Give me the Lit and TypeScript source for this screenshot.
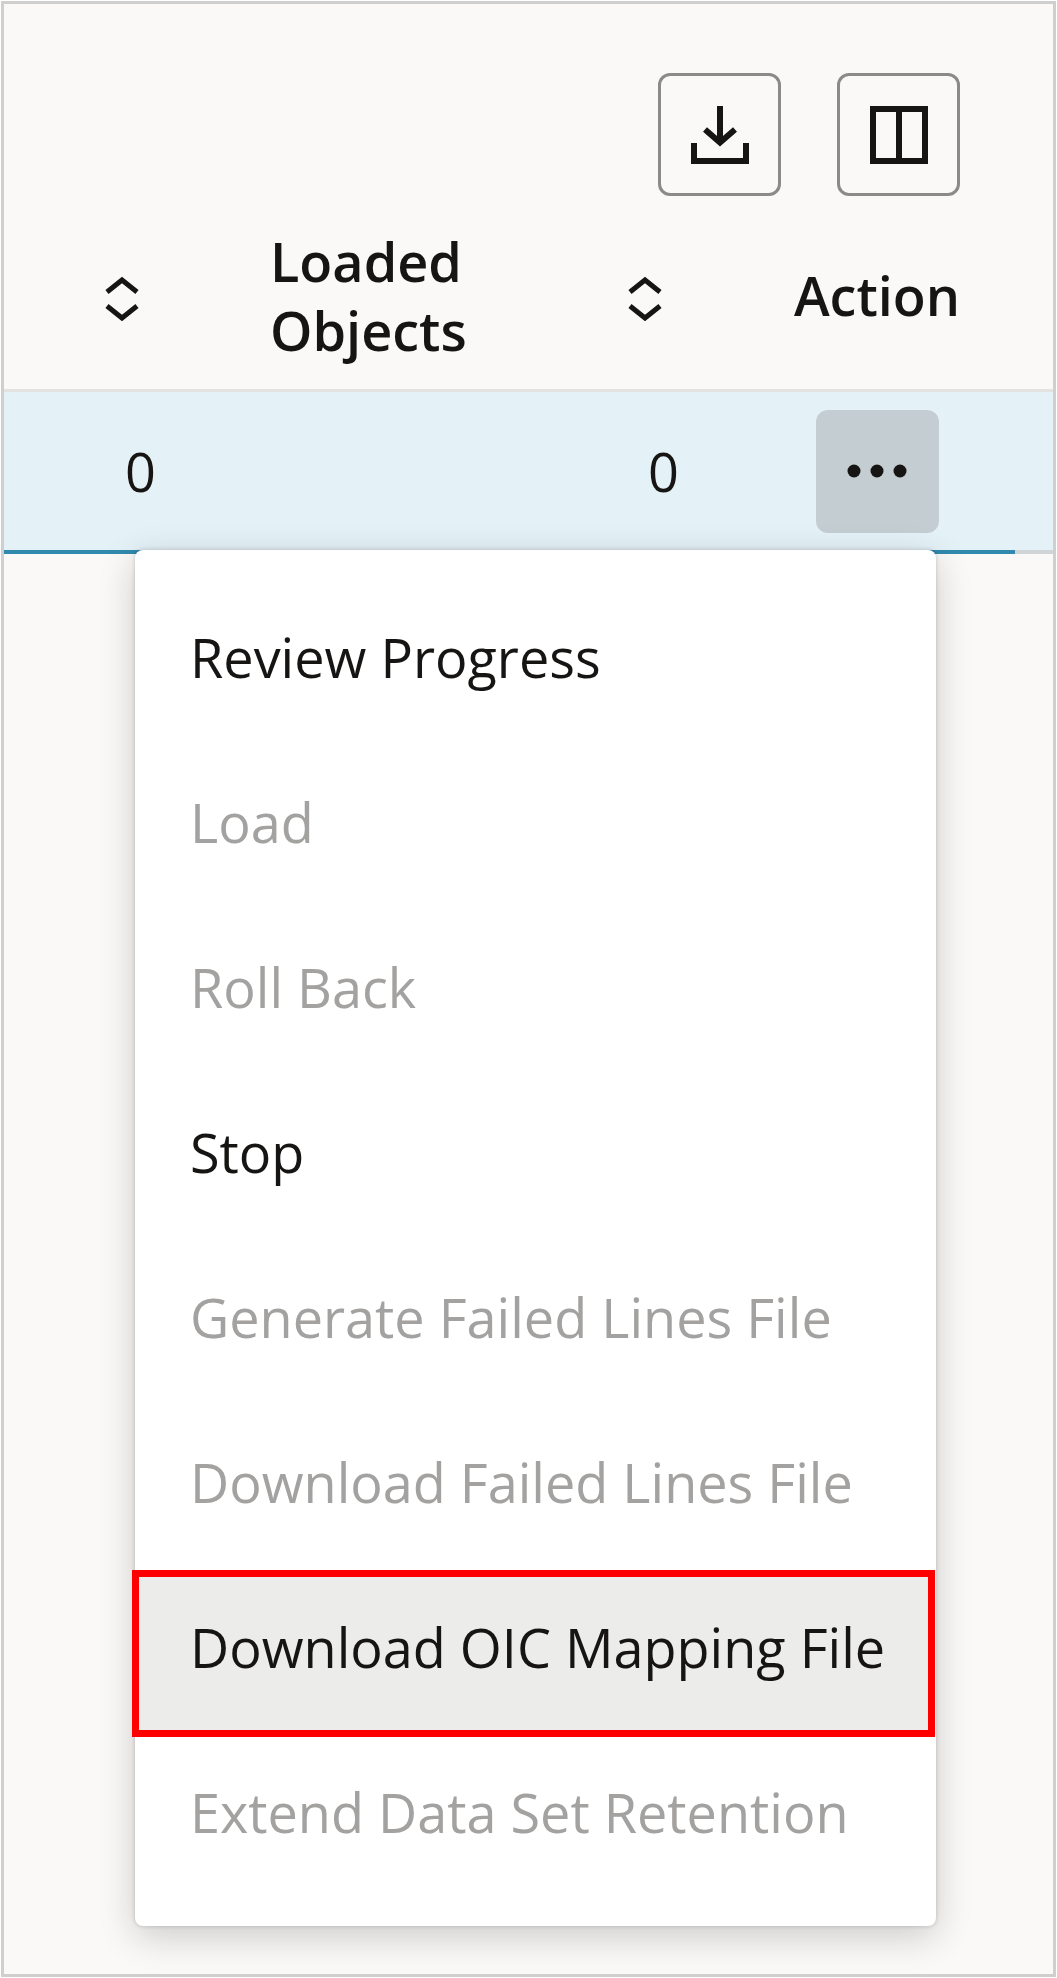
import { LitElement, html, css, svg } from "lit";
import { customElement, property, state } from "lit/decorators.js";
import { classMap } from "lit/directives/class-map.js";

interface MenuItem {
  label: string;
  disabled?: boolean;
  highlighted?: boolean;
}

const downloadIcon = svg`
  <svg viewBox="0 0 60 60" width="60" height="60" fill="none" stroke="currentColor" stroke-width="6" aria-hidden="true">
    <path d="M30 1V38"/>
    <path d="M15 24.500L30 37.500L45 24.500"/>
    <path d="M24 33H36L30 39.500Z" fill="currentColor" stroke-width="2"/>
    <path d="M4 38V56H56V38"/>
  </svg>`;

const columnsIcon = svg`
  <svg viewBox="0 0 60 60" width="60" height="60" fill="none" stroke="currentColor" stroke-width="6" aria-hidden="true">
    <path d="M4 4H56V56H4Z"/>
    <path d="M30 4V56"/>
  </svg>`;

const sortIcon = svg`
  <svg viewBox="0 0 36 48" width="36" height="48" fill="none" stroke="currentColor" stroke-width="5" aria-hidden="true">
    <path d="M3 17L18 5L33 17"/>
    <path d="M3 31L18 43L33 31"/>
  </svg>`;

const moreIcon = svg`
  <svg viewBox="0 0 60 16" width="60" height="16" fill="currentColor" aria-hidden="true">
    <circle cx="7" cy="8" r="6.500"/>
    <circle cx="30" cy="8" r="6.500"/>
    <circle cx="53" cy="8" r="6.500"/>
  </svg>`;

@customElement("action-menu")
export class ActionMenu extends LitElement {
  @property({ attribute: false }) items: MenuItem[] = [];

  static styles = css`
    :host {
      display: block;
    }
    .menu {
      list-style: none;
      margin: 0;
      padding: 30px 0 26px;
      background: #fff;
      border-radius: 8px;
      box-shadow: 0 0 4px rgba(22, 21, 19, 0.2), 0 10px 36px rgba(22, 21, 19, 0.2);
    }
    .item {
      position: relative;
      display: flex;
      align-items: center;
      box-sizing: border-box;
      width: 100%;
      height: 165px;
      margin: 0;
      padding: 0 55px 10px;
      border: 0;
      background: transparent;
      color: #161513;
      font: inherit;
      text-align: left;
      white-space: nowrap;
    }
    .item:disabled {
      color: #a3a2a0;
    }
    .highlighted {
      background: #ececea;
    }
    /* The marker frame lies over the row and slightly past its edges. */
    .highlighted::after {
      content: "";
      position: absolute;
      inset: 0 1px -2px -3px;
      border: 7px solid #f00;
    }
  `;

  render() {
    return html`<ul class="menu" role="menu">
      ${this.items.map(
        (item) => html`<li role="none">
          <button
            role="menuitem"
            class=${classMap({ item: true, highlighted: !!item.highlighted })}
            ?disabled=${item.disabled}
          >${item.label}</button>
        </li>`
      )}
    </ul>`;
  }
}

@customElement("app-root")
export class AppRoot extends LitElement {
  @state() private items: MenuItem[] = [
    { label: "Review Progress" },
    { label: "Load", disabled: true },
    { label: "Roll Back", disabled: true },
    { label: "Stop" },
    { label: "Generate Failed Lines File", disabled: true },
    { label: "Download Failed Lines File", disabled: true },
    { label: "Download OIC Mapping File", highlighted: true },
    { label: "Extend Data Set Retention", disabled: true },
  ];

  static styles = css`
    :host {
      display: block;
      padding: 1px;
      background: #fff;
      color: #161513;
      font: 400 54px/69px "Open Sans", "Noto Sans", sans-serif;
    }
    button {
      display: inline-flex;
      align-items: center;
      justify-content: center;
      box-sizing: border-box;
      padding: 0;
      border: 0;
      background: transparent;
      color: inherit;
      font: inherit;
    }
    .frame {
      border: 3px solid #cfcfcf;
      background: #fbf9f8;
      padding: 69px 0 48px;
    }
    .toolbar {
      display: flex;
      justify-content: flex-end;
      gap: 56px;
      padding-right: 93px;
    }
    .tool,
    .more {
      width: 123px;
      height: 123px;
      border-radius: 12px;
    }
    .tool {
      border: 3px solid #8b8a88;
    }
    .more {
      background: #c4cdd1;
    }
    .table {
      width: 100%;
      table-layout: fixed;
      border-collapse: separate;
      border-spacing: 0;
    }
    .narrow {
      width: 212px;
    }
    .action {
      width: 276px;
    }
    .rest {
      width: 38px;
    }
    th {
      box-sizing: border-box;
      height: 196px;
      padding: 6px 0 0;
      border-bottom: 3px solid #e3e2e0;
      font-weight: 600;
      text-align: center;
      vertical-align: middle;
    }
    .head {
      display: flex;
      align-items: center;
      justify-content: space-between;
      padding: 0 58px 0 54px;
      text-align: left;
    }
    .head.end {
      justify-content: flex-end;
    }
    .sort {
      flex: none;
      width: 72px;
      height: 72px;
      padding-top: 6px;
    }
    td {
      box-sizing: border-box;
      height: 162px;
      padding: 0;
      border-bottom: 4px solid #d0d4d6;
      background: #e4f1f7;
      text-align: center;
      vertical-align: middle;
    }
    .cell {
      border-bottom-color: #318aad;
    }
    .number {
      padding-right: 60px;
      text-align: right;
    }
    .more {
      display: flex;
      margin: 0 auto;
    }
    .popup {
      position: relative;
      margin: -4px 117px 0 131px;
    }
  `;

  private sortButton(label: string) {
    return html`<button class="sort" aria-label=${label}>${sortIcon}</button>`;
  }

  render() {
    return html`<main class="frame">
      <div class="toolbar">
        <button class="tool" aria-label="Download">${downloadIcon}</button>
        <button class="tool" aria-label="Manage columns">${columnsIcon}</button>
      </div>
      <table class="table">
        <colgroup>
          <col class="narrow" />
          <col />
          <col class="action" />
          <col class="rest" />
        </colgroup>
        <thead>
          <tr>
            <th scope="col"><div class="head end">${this.sortButton("Sort")}</div></th>
            <th scope="col">
              <div class="head"><span>Loaded<br />Objects</span>${this.sortButton("Sort by loaded objects")}</div>
            </th>
            <th scope="col">Action</th>
            <th></th>
          </tr>
        </thead>
        <tbody>
          <tr>
            <td class="cell number">0</td>
            <td class="cell number">0</td>
            <td class="cell">
              <button class="more" aria-label="Actions" aria-haspopup="menu" aria-expanded="true">${moreIcon}</button>
            </td>
            <td></td>
          </tr>
        </tbody>
      </table>
      <action-menu class="popup" .items=${this.items}></action-menu>
    </main>`;
  }
}
